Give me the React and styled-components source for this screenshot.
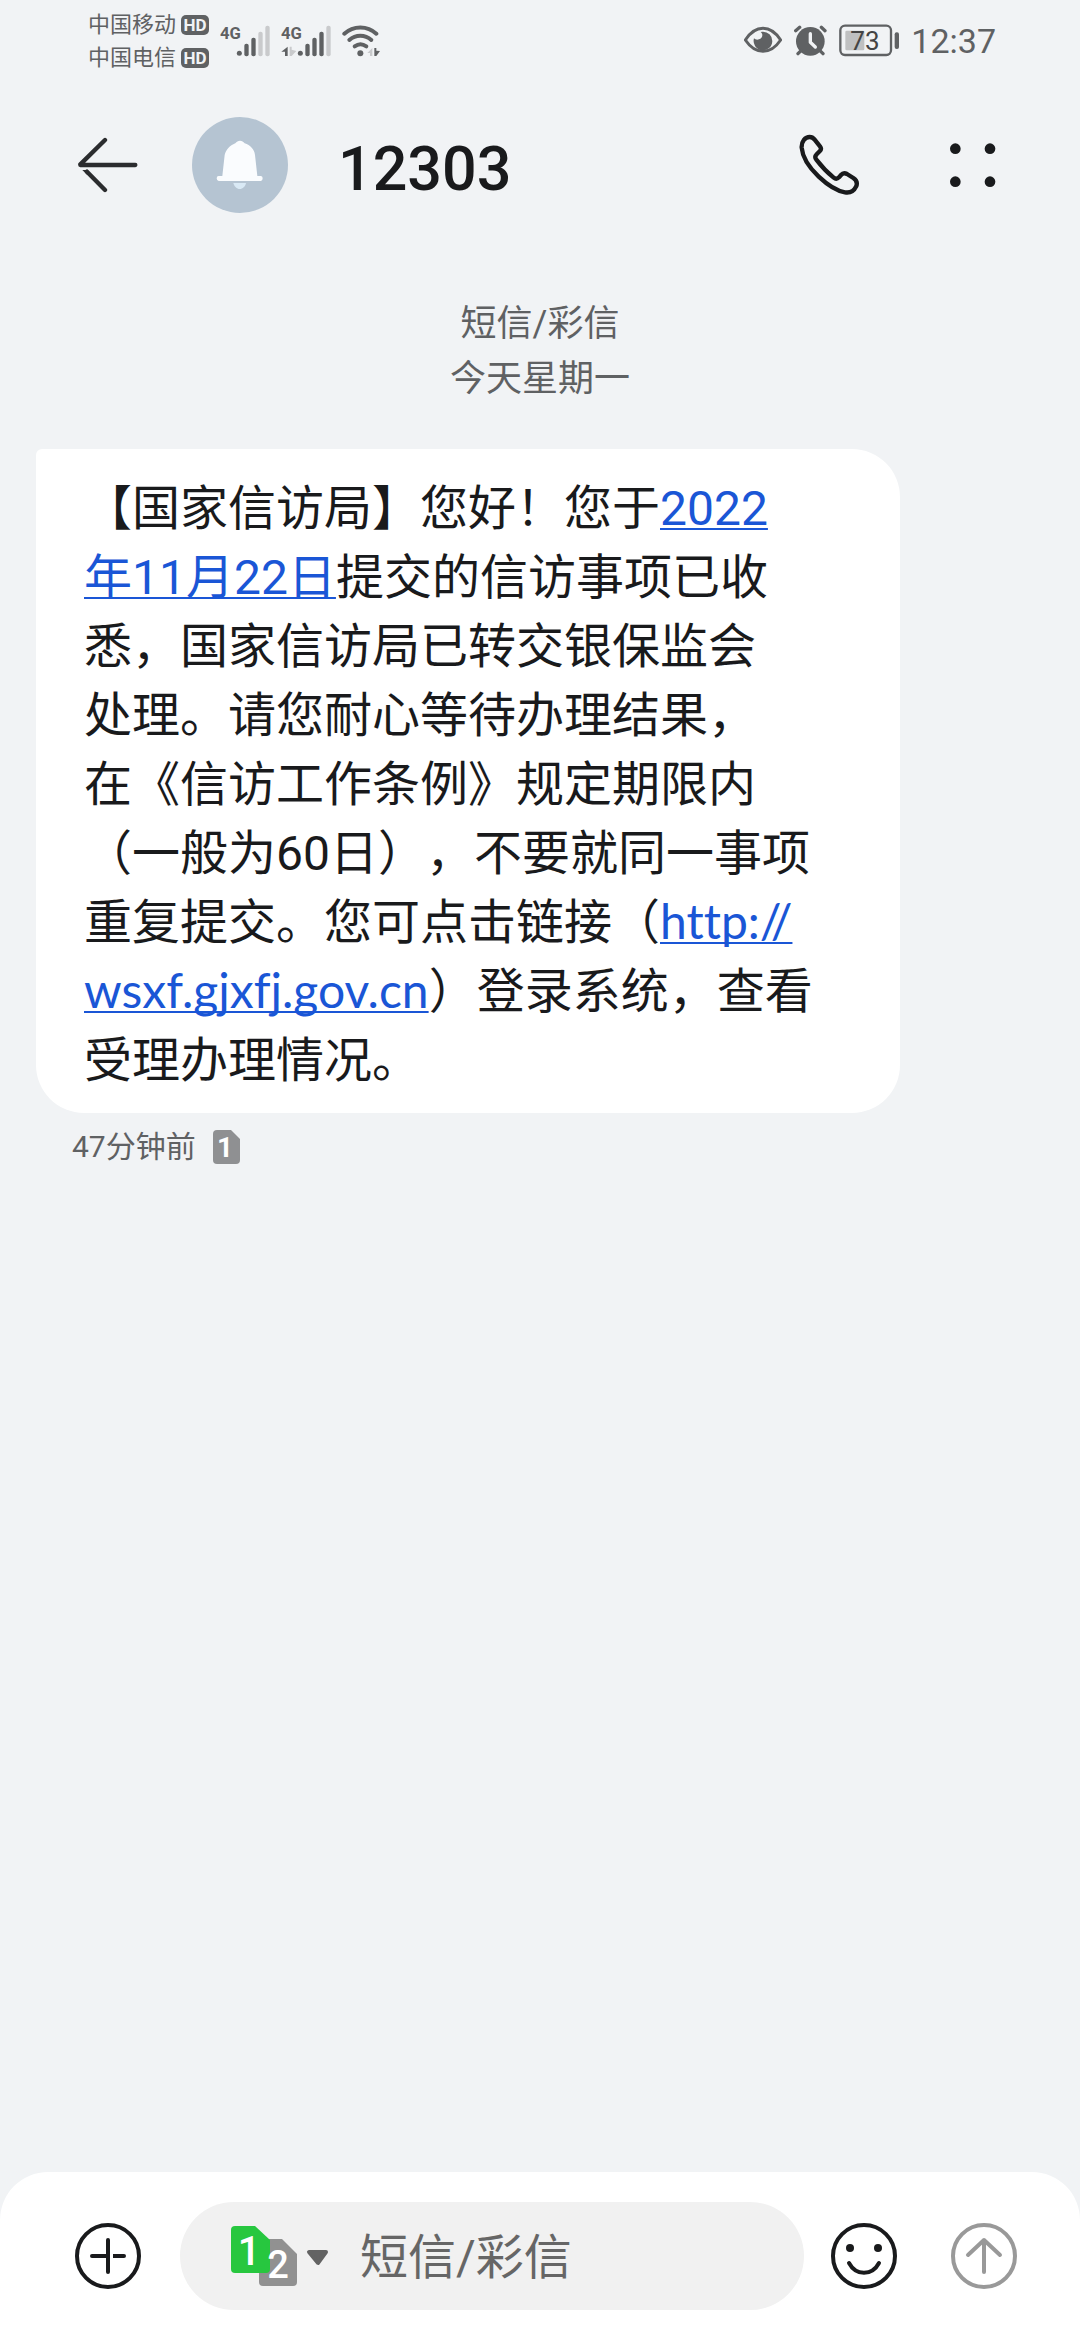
import React from "react";
import styled, { createGlobalStyle } from "styled-components";

const ink = "#191a1c";
const muted = "#5f6163";
const faint = "#c9cacc";
const link = "#1a56d6";

const GlobalStyle = createGlobalStyle`
  *, *::before, *::after { box-sizing: border-box; }
  body {
    margin: 0;
    background: #f1f3f5;
    color: ${ink};
    font-family: Roboto, "Noto Sans CJK SC", sans-serif;
  }
  button { border: 0; padding: 0; background: none; color: inherit; font: inherit; cursor: pointer; }
  svg { display: block; flex: none; }
`;

const Screen = styled.div`
  display: flex;
  flex-direction: column;
  min-height: 100vh;
`;

const StatusBar = styled.div`
  display: flex;
  align-items: center;
  justify-content: space-between;
  height: 80px;
  padding: 0 84px 0 88px;
  color: ${muted};
`;

const StatusGroup = styled.div`
  display: flex;
  align-items: center;
  gap: ${(p) => p.$gap}px;
`;

const Carriers = styled.div`
  display: flex;
  flex-direction: column;
  padding-top: 2px;
`;

const Carrier = styled.div`
  display: flex;
  align-items: center;
  gap: 5px;
  font-size: 22px;
  line-height: 33px;
`;

const HdBadge = styled.span`
  display: flex;
  align-items: center;
  justify-content: center;
  width: 28px;
  height: 20px;
  border-radius: 5px;
  background: ${muted};
  color: #f1f3f5;
  font-size: 17px;
  font-weight: 700;
  line-height: 20px;
`;

const Clock = styled.time`
  padding-top: 2px;
  font-size: 34px;
  line-height: 40px;
`;

const Header = styled.header`
  display: flex;
  align-items: center;
  height: 170px;
  padding: 0 84px 0 78px;
`;

const Avatar = styled.div`
  margin-left: 54px;
`;

const Title = styled.h1`
  flex: 1;
  margin: 0 0 0 50px;
  padding-top: 8px;
  font-size: 61px;
  font-weight: 500;
  line-height: 72px;
`;

const HeaderActions = styled.div`
  display: flex;
  align-items: center;
  gap: 90px;
`;

const Thread = styled.main`
  flex: 1;
  padding: 47px 36px;
`;

const DayLabel = styled.div`
  color: ${muted};
  font-size: 36px;
  line-height: 55px;
  text-align: center;
`;

const Bubble = styled.article`
  width: fit-content;
  min-width: 864px;
  margin-top: 42px;
  padding: 25px 48px 18px;
  border-radius: 6px 48px 48px 48px;
  background: #fff;
  font-size: 48px;
  line-height: 69px;
  text-spacing-trim: space-all;
  white-space: nowrap;
`;

const TextLink = styled.a`
  color: ${link};
  text-decoration: underline;
  text-decoration-thickness: 2px;
  text-decoration-skip-ink: none;
  text-underline-offset: 3px;
`;

const UrlLink = styled(TextLink)`
  font-family: Lato, sans-serif;
  font-variant-ligatures: none;
  line-height: 48px;
`;

const Meta = styled.div`
  display: flex;
  align-items: center;
  gap: 17px;
  padding: 10px 36px;
  color: ${muted};
  font-size: 30px;
  line-height: 48px;
`;

const Composer = styled.form`
  display: flex;
  align-items: center;
  padding: 30px 63px 30px 75px;
  border-radius: 48px 48px 0 0;
  background: #fff;
`;

const Field = styled.div`
  display: flex;
  flex: 1;
  align-items: center;
  gap: 31px;
  min-width: 0;
  height: 108px;
  margin: 0 27px 0 39px;
  padding: 0 51px;
  border-radius: 54px;
  background: #f1f1f1;
`;

const MessageInput = styled.input`
  flex: 1;
  min-width: 0;
  padding: 4px 0 0;
  border: 0;
  outline: 0;
  background: transparent;
  color: ${ink};
  font: inherit;
  font-size: 48px;
  line-height: 72px;
  &::placeholder { color: #666; opacity: 1; }
`;

const ComposerActions = styled.div`
  display: flex;
  gap: 54px;
`;

const glyphFont = { fontFamily: "Roboto, sans-serif" };
const narrowFont = { fontFamily: '"Liberation Sans Narrow", Roboto, sans-serif' };

function Bars({ x, levels }) {
  const tops = [128, 110, 92, 74];
  return (
    <g>
      <circle cx={x + 6} cy="157" r="7.5" fill={muted} />
      {tops.map((top, i) => (
        <rect
          key={top}
          x={x + 21 * (i + 1)}
          y={top}
          width="13"
          height={166 - top}
          rx="6"
          fill={i < levels ? muted : faint}
        />
      ))}
    </g>
  );
}

function SignalOne() {
  return (
    <svg width="50" height="33" viewBox="449 69 150 99" role="img" aria-label="4G">
      <text x="449" y="114" fontSize="50" fontWeight="700" fill={muted} style={narrowFont}>4G</text>
      <Bars x={501} levels={2} />
    </svg>
  );
}

function SignalTwo() {
  return (
    <svg width="50" height="33" viewBox="632 69 150 99" role="img" aria-label="4G">
      <text x="632" y="114" fontSize="50" fontWeight="700" fill={muted} style={narrowFont}>4G</text>
      <path d="M652 137V165H644V152H633Z" fill={muted} />
      <path d="M658 137H664V146L678 150L664 165H658Z" fill={faint} />
      <Bars x={684} levels={3} />
    </svg>
  );
}

function Wifi() {
  return (
    <svg width="38" height="33" viewBox="809 69 114 99" role="img" aria-label="Wi-Fi">
      <g fill="none" stroke={muted} strokeWidth="12" strokeLinecap="round">
        <path d="M816 98C843 73 885 73 912 98" />
        <path d="M831 117C850 100 878 100 897 117" />
        <path d="M847 136C858 128 871 128 882 136" />
      </g>
      <circle cx="864" cy="157" r="9" fill={muted} />
      <path d="M900 141V165H893V156H885Z" fill={faint} />
      <path d="M906 141H912V149L923 150L912 165H906Z" fill={muted} />
    </svg>
  );
}

function Eye() {
  return (
    <svg width="38" height="28" viewBox="39 78 114 84" aria-hidden="true">
      <path d="M43 120Q66 85 96 85T149 120Q126 154 96 154T43 120Z" fill="none" stroke={muted} strokeWidth="9" strokeLinejoin="round" />
      <path d="M94 95A28 28 0 1 1 69 115C72 118 78 121 84 118C94 115 98 103 89 96Z" fill={muted} />
    </svg>
  );
}

function Alarm() {
  return (
    <svg width="33" height="31" viewBox="188 73 99 93" aria-hidden="true">
      <circle cx="237" cy="122" r="43" fill={muted} />
      <g fill="none" stroke={muted} strokeWidth="10" strokeLinecap="round">
        <path d="M193 90L205 80M281 90L270 80M210 149L200 159M265 149L275 159" />
      </g>
      <path d="M237 99V125L252 139" fill="none" stroke="#f1f3f5" strokeWidth="10" strokeLinecap="round" strokeLinejoin="round" />
    </svg>
  );
}

function Battery() {
  return (
    <svg width="60" height="33" viewBox="322 72 180 99" role="img" aria-label="73%">
      <rect x="326" y="77" width="152" height="88" rx="14" fill="none" stroke={muted} strokeWidth="7" />
      <rect x="341" y="92" width="57" height="59" rx="4" fill="#bfc0c1" />
      <rect x="489" y="97" width="13" height="50" rx="6" fill={muted} />
      <text x="400" y="149" fontSize="78" textAnchor="middle" fill="#444" style={glyphFont}>73</text>
    </svg>
  );
}

function BackArrow() {
  return (
    <svg width="60" height="56" viewBox="53 111 180 168" aria-hidden="true">
      <g fill="none" stroke="#2b2c2e" strokeWidth="13" strokeLinecap="round" strokeLinejoin="round">
        <path d="M134 120L60 193M60 195H225" />
        <path d="M80 215L134 270" />
      </g>
      <path d="M66 210H83L86 224H80Z" fill="#2b2c2e" />
    </svg>
  );
}

function BellAvatar() {
  return (
    <svg width="96" height="96" viewBox="396 51 288 288" aria-hidden="true">
      <circle cx="540" cy="195" r="144" fill="#b5c4d2" />
      <path d="M540 122C546 122 550 125 554 130C571 136 583 148 585 165L592 228H603Q608 229 608 235T603 243H476Q470 242 470 235T476 228H487L494 165C498 149 509 137 526 130C530 125 534 122 540 122Z" fill="#fafcfe" />
      <path d="M520 249H558C556 260 548 267 539 267C530 267 523 260 520 249Z" fill="#d9e9f5" />
    </svg>
  );
}

function PhoneIcon() {
  return (
    <svg width="62" height="62" viewBox="81 72 186 186" aria-hidden="true">
      <path
        d="M92 113C91 94 103 81 116 81C122 81 127 84 131 89L147 109C151 114 151 119 146 124L137 133C132 138 132 144 136 149C152 170 168 187 188 203C193 207 199 207 204 202L210 195C215 189 221 188 228 192L247 204C257 211 260 220 255 230C249 243 236 249 222 247C180 240 97 173 92 113Z"
        fill="none"
        stroke={ink}
        strokeWidth="13"
        strokeLinejoin="round"
      />
    </svg>
  );
}

function MoreIcon() {
  return (
    <svg width="46" height="44" viewBox="538 96 138 132" aria-hidden="true">
      <g fill={ink}>
        <circle cx="554" cy="113" r="16" />
        <circle cx="658" cy="113" r="16" />
        <circle cx="554" cy="212" r="16" />
        <circle cx="658" cy="212" r="16" />
      </g>
    </svg>
  );
}

function SimBadge() {
  return (
    <svg width="27" height="34" viewBox="0 0 27 34" role="img" aria-label="SIM 1">
      <path d="M4 0H18L27 9V30Q27 34 23 34H4Q0 34 0 30V4Q0 0 4 0Z" fill="#8f9092" />
      <text x="12" y="27" fontSize="28" fontWeight="700" textAnchor="middle" fill="#fff" style={glyphFont}>1</text>
    </svg>
  );
}

function SimPicker() {
  return (
    <svg width="98" height="72" viewBox="0 -6 98 72" aria-hidden="true">
      <path d="M32 13H51L66 28V56Q66 60 62 60H32Q28 60 28 56V17Q28 13 32 13Z" fill="#919191" />
      <path d="M4 0H24L39 14V43Q39 47 35 47H4Q0 47 0 43V4Q0 0 4 0Z" fill="#27c73f" />
      <text x="18" y="39" fontSize="40" fontWeight="500" textAnchor="middle" fill="#fff" style={glyphFont}>1</text>
      <text x="47" y="52" fontSize="38" fontWeight="500" textAnchor="middle" fill="#fff" style={glyphFont}>2</text>
      <path d="M78 26H95L87 37Z" fill="#636363" stroke="#636363" strokeWidth="4" strokeLinejoin="round" />
    </svg>
  );
}

function PlusIcon() {
  return (
    <svg width="66" height="66" viewBox="0 0 66 66" fill="none" stroke={ink} strokeWidth="4" strokeLinecap="round" aria-hidden="true">
      <circle cx="33" cy="33" r="31" />
      <path d="M33 17V49M17 33H33M41 33H49" />
      <path d="M38 33H44" strokeLinecap="butt" />
    </svg>
  );
}

function SmileIcon() {
  return (
    <svg width="66" height="66" viewBox="0 0 66 66" fill="none" stroke={ink} strokeWidth="4" strokeLinecap="round" aria-hidden="true">
      <circle cx="33" cy="33" r="31" />
      <circle cx="19" cy="25" r="4" fill={ink} stroke="none" />
      <circle cx="47" cy="25" r="4" fill={ink} stroke="none" />
      <path d="M18 40C25 53 41 53 48 40" />
    </svg>
  );
}

function SendIcon() {
  return (
    <svg width="66" height="66" viewBox="0 0 66 66" fill="none" stroke="#999" strokeWidth="4" strokeLinecap="round" strokeLinejoin="round" aria-hidden="true">
      <circle cx="33" cy="33" r="31" />
      <path d="M33 17V49M17 32L33 17L49 32" />
    </svg>
  );
}

export default function App() {
  return (
    <Screen>
      <GlobalStyle />
      <StatusBar>
        <StatusGroup $gap={11}>
          <Carriers>
            <Carrier>中国移动<HdBadge>HD</HdBadge></Carrier>
            <Carrier>中国电信<HdBadge>HD</HdBadge></Carrier>
          </Carriers>
          <SignalOne />
          <SignalTwo />
          <Wifi />
        </StatusGroup>
        <StatusGroup $gap={12}>
          <Eye />
          <Alarm />
          <Battery />
          <Clock>12:37</Clock>
        </StatusGroup>
      </StatusBar>

      <Header>
        <button type="button" aria-label="返回"><BackArrow /></button>
        <Avatar><BellAvatar /></Avatar>
        <Title>12303</Title>
        <HeaderActions>
          <button type="button" aria-label="拨打电话"><PhoneIcon /></button>
          <button type="button" aria-label="更多"><MoreIcon /></button>
        </HeaderActions>
      </Header>

      <Thread>
        <DayLabel>短信/彩信</DayLabel>
        <DayLabel>今天星期一</DayLabel>
        <Bubble>
          【国家信访局】您好！您于<TextLink href="#date">2022<br />年11月22日</TextLink>提交的信访事项已收<br />
          悉，国家信访局已转交银保监会<br />
          处理。请您耐心等待办理结果，<br />
          在《信访工作条例》规定期限内<br />
          （一般为60日），不要就同一事项<br />
          重复提交。您可点击链接（<UrlLink href="http://wsxf.gjxfj.gov.cn">http://<br />wsxf.gjxfj.gov.cn</UrlLink>）登录系统，查看<br />
          受理办理情况。
        </Bubble>
        <Meta>
          <span>47分钟前</span>
          <SimBadge />
        </Meta>
      </Thread>

      <Composer onSubmit={(e) => e.preventDefault()}>
        <button type="button" aria-label="添加附件"><PlusIcon /></button>
        <Field>
          <button type="button" aria-label="选择 SIM 卡"><SimPicker /></button>
          <MessageInput type="text" aria-label="短信内容" placeholder="短信/彩信" />
        </Field>
        <ComposerActions>
          <button type="button" aria-label="表情"><SmileIcon /></button>
          <button type="submit" aria-label="发送"><SendIcon /></button>
        </ComposerActions>
      </Composer>
    </Screen>
  );
}
